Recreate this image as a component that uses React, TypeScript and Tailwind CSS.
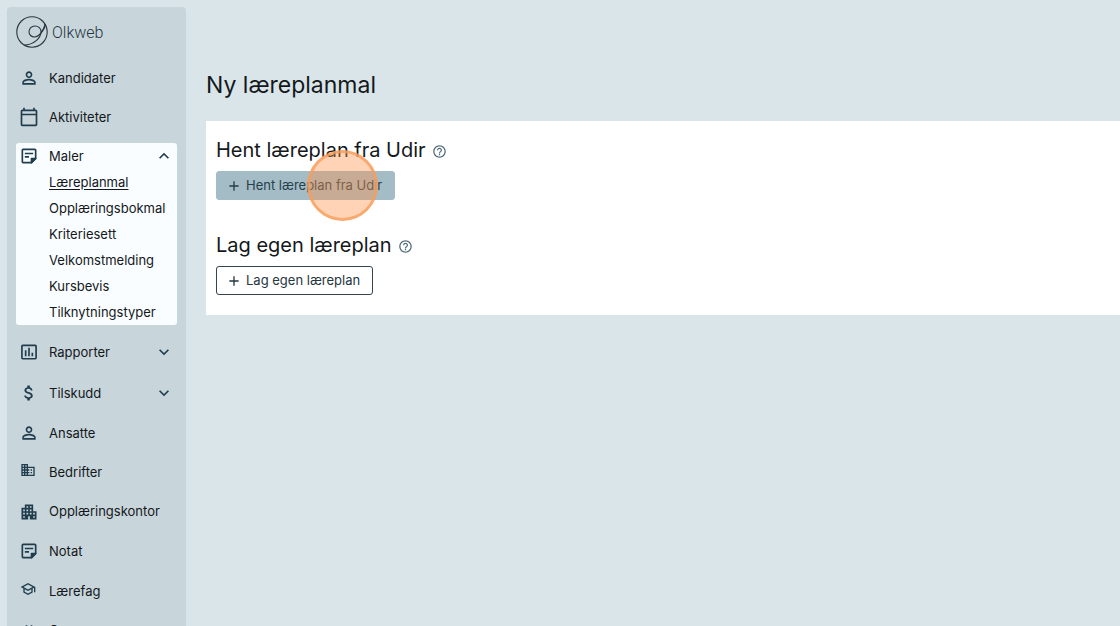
import type { ReactNode } from "react";
import {
  MdAdd,
  MdApartment,
  MdAttachMoney,
  MdBusiness,
  MdExpandLess,
  MdExpandMore,
  MdHelpOutline,
  MdInsertChartOutlined,
  MdOutlineSchool,
  MdPersonOutline,
  MdTag,
} from "react-icons/md";

function CalendarIcon() {
  return (
    <svg viewBox="0 0 24 24" className="size-5" fill="currentColor">
      <path d="M20 3h-1V1h-2v2H7V1H5v2H4c-1.1 0-2 .9-2 2v16c0 1.1.9 2 2 2h16c1.1 0 2-.9 2-2V5c0-1.1-.9-2-2-2zm0 18H4V10h16v11zm0-13H4V5h16v3z" />
    </svg>
  );
}

function NoteIcon() {
  return (
    <svg viewBox="0 0 24 24" className="size-5" fill="none" stroke="currentColor" strokeWidth="2">
      <path d="M20 15V5a1 1 0 0 0-1-1H5a1 1 0 0 0-1 1v14a1 1 0 0 0 1 1h10z" strokeLinejoin="round" />
      <path d="M15 20v-5h5z" fill="currentColor" strokeLinejoin="round" />
      <path d="M7 9h10M7 13h5" />
    </svg>
  );
}

function Logo() {
  return (
    <a href="#" className="flex h-8 items-center gap-1 text-[#26363f]">
      <svg viewBox="0 0 32 32" className="size-8" fill="none" stroke="currentColor" strokeWidth="1.1">
        <circle cx="16" cy="16" r="15.2" />
        <path d="M29.3 8C28 13 23.5 21 18.5 21C15.3 21 13 18.7 13 15.8C13 12.6 15.6 10 19 10C22.5 10 25 12.5 25 15.5C25 22 18 29 8 29" />
        <path d="M29.3 8C29 12 27 15 24.6 17.6" />
      </svg>
      <span className="pt-0.5 font-[Roboto,sans-serif] text-base font-light">Olkweb</span>
    </a>
  );
}

type ItemProps = { label: string; icon: ReactNode; chevron?: boolean; tall?: boolean };

function NavItem({ label, icon, chevron, tall }: ItemProps) {
  const content = (
    <>
      <span className="flex w-5 text-[#1f3d4d]">{icon}</span>
      <span className="flex-1 text-left">{label}</span>
      {chevron && <MdExpandMore className="size-5 text-[#1f3d4d]" />}
    </>
  );
  const classes = `flex w-full items-center gap-2.5 px-[3px] ${tall ? "h-[22px]" : "h-5"}`;

  return chevron ? (
    <button type="button" aria-expanded="false" className={classes}>
      {content}
    </button>
  ) : (
    <a href="#" className={classes}>
      {content}
    </a>
  );
}

const templates = [
  "Læreplanmal",
  "Opplæringsbokmal",
  "Kriteriesett",
  "Velkomstmelding",
  "Kursbevis",
  "Tilknytningstyper",
];

const items: ItemProps[] = [
  { label: "Rapporter", icon: <MdInsertChartOutlined className="size-5" />, chevron: true, tall: true },
  { label: "Tilskudd", icon: <MdAttachMoney className="size-5" />, chevron: true, tall: true },
  { label: "Ansatte", icon: <MdPersonOutline className="size-5" /> },
  { label: "Bedrifter", icon: <MdBusiness className="mb-1 ml-px size-4" /> },
  { label: "Opplæringskontor", icon: <MdApartment className="mt-0.5 size-5" /> },
  { label: "Notat", icon: <NoteIcon />, tall: true },
  { label: "Lærefag", icon: <MdOutlineSchool className="mb-1 ml-px size-4" /> },
  { label: "Grupper", icon: <MdTag className="mt-1 size-5" /> },
];

function Sidebar() {
  return (
    <aside className="mt-[7px] ml-[7px] w-[179px] shrink-0 rounded-t-sm bg-[#c8d5db] px-[9px] pt-[9px]">
      <Logo />
      <nav className="mt-5 text-[13px] leading-5">
        <div className="flex flex-col gap-[19px]">
          <NavItem label="Kandidater" icon={<MdPersonOutline className="size-5" />} />
          <NavItem label="Aktiviteter" icon={<CalendarIcon />} />
        </div>

        <div className="mt-4 rounded-[3px] bg-[#f9fdff] pt-[3px]">
          <button type="button" aria-expanded="true" className="flex h-5 w-full items-center gap-2.5 px-[3px]">
            <span className="text-[#1f3d4d]">
              <NoteIcon />
            </span>
            <span className="flex-1 text-left">Maler</span>
            <MdExpandLess className="size-5 text-[#1f3d4d]" />
          </button>
          <ul className="mt-[3px] pl-[33px] leading-[26px]">
            {templates.map((name, i) => (
              <li key={name}>
                <a href="#" className={i === 0 ? "underline underline-offset-2" : ""}>
                  {name}
                </a>
              </li>
            ))}
          </ul>
        </div>

        <div className="mt-4 flex flex-col gap-[19px]">
          {items.map((item) => (
            <NavItem key={item.label} {...item} />
          ))}
        </div>
      </nav>
    </aside>
  );
}

function SectionTitle({ children }: { children: ReactNode }) {
  return (
    <h2 className="flex items-center gap-1.5 text-xl leading-7">
      {children}
      <MdHelpOutline className="mt-0.5 size-[15px] text-[#4f6b78]" />
    </h2>
  );
}

export default function App() {
  return (
    <div className="flex h-screen overflow-hidden bg-[#dae5ea] font-[Inter,sans-serif] text-[#14181b]">
      <Sidebar />
      <main className="min-w-0 flex-1 pl-5">
        <h1 className="mt-[69px] text-[23px] leading-8">Ny læreplanmal</h1>

        <div className="mt-5 bg-white px-2.5 pt-[15px] pb-5">
          <section>
            <SectionTitle>Hent læreplan fra Udir</SectionTitle>
            <div className="relative mt-[7px] w-fit">
              <button
                type="button"
                className="flex h-[29px] items-center gap-1 rounded-[3px] border border-[#a3bcc6] bg-[#a3bcc6] pr-3 pl-[9px] text-[13px] text-[#263f4b]"
              >
                <MdAdd className="size-4" />
                Hent læreplan fra Udir
              </button>
              <span className="pointer-events-none absolute -top-[21px] left-[91px] size-[71px] rounded-full border-[3px] border-[#f79d5c]/80 bg-[#ff9248]/40" />
            </div>
          </section>

          <section className="mt-[31px]">
            <SectionTitle>Lag egen læreplan</SectionTitle>
            <button
              type="button"
              className="mt-[7px] flex h-[29px] items-center gap-1 rounded-[3px] border border-[#34434d] pr-3 pl-[9px] text-[13px] text-[#263640]"
            >
              <MdAdd className="size-4" />
              Lag egen læreplan
            </button>
          </section>
        </div>
      </main>
    </div>
  );
}
